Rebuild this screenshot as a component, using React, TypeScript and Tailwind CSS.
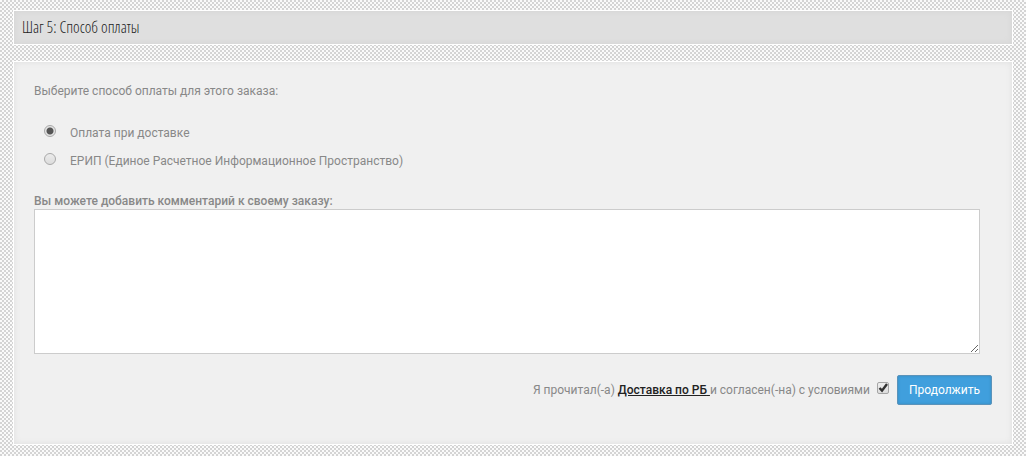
import { useState } from "react";

const radioClass =
  "size-3 shrink-0 appearance-none rounded-full border border-[#a9a9a9] bg-linear-to-b from-[#ececec] to-[#dcdcdc] checked:bg-[radial-gradient(circle,#555_3px,#e4e4e4_4px)]";

const methods = [
  { id: "cod", label: "Оплата при доставке" },
  { id: "erip", label: "ЕРИП (Единое Расчетное Информационное Пространство)" },
];

export default function App() {
  const [method, setMethod] = useState("cod");
  const [agreed, setAgreed] = useState(true);

  return (
    <main className="min-h-screen bg-[#fafafa] bg-[conic-gradient(#d4d4d4_25%,transparent_0_50%,#d4d4d4_0_75%,transparent_0)] bg-size-[4px_4px] px-[13px] py-[10px] font-['Roboto',sans-serif] text-[12px] leading-4 text-[#888]">
      <h2 className="border border-white bg-[#dfdfdf] px-2 py-[7px] font-['Open_Sans_Condensed_Light','Open_Sans_Condensed','Liberation_Sans_Narrow',sans-serif] text-[16px] leading-[19px] font-light text-[#222] shadow-[inset_0_0_6px_#d3d3d3]">
        Шаг 5: Способ оплаты
      </h2>

      <form
        className="mt-4 border border-white bg-[#f0f0f0] pt-[21px] pr-5 pb-[39px] pl-5 shadow-[inset_0_0_6px_#dedede]"
        onSubmit={(e) => e.preventDefault()}
      >
        <fieldset>
          <legend>Выберите способ оплаты для этого заказа:</legend>
          <div className="mt-[26px] flex flex-col gap-3 pl-[10px]">
            {methods.map((m) => (
              <label key={m.id} className="flex gap-[14px]">
                <input
                  type="radio"
                  name="payment"
                  value={m.id}
                  checked={method === m.id}
                  onChange={() => setMethod(m.id)}
                  className={radioClass}
                />
                {m.label}
              </label>
            ))}
          </div>
        </fieldset>

        <label htmlFor="comment" className="mt-6 block font-medium">
          Вы можете добавить комментарий к своему заказу:
        </label>
        <textarea
          id="comment"
          className="block h-[145px] w-[calc(100%-12px)] border border-[#ccc] bg-white"
        />

        <div className="mt-[21px] flex items-center justify-end">
          <label htmlFor="agree">
            Я прочитал(-а){" "}
            <a href="#delivery" className="font-medium text-[#222] underline">
              Доставка по РБ{" "}
            </a>
            и согласен(-на) с условиями
          </label>
          <span className="relative mr-2 mb-1 ml-[7px] flex">
            <input
              id="agree"
              type="checkbox"
              checked={agreed}
              onChange={(e) => setAgreed(e.target.checked)}
              className="size-3 appearance-none rounded-xs border border-[#a5a5a5] bg-linear-to-b from-[#eee] to-[#ddd]"
            />
            {agreed && (
              <svg viewBox="0 0 12 12" className="pointer-events-none absolute inset-0 size-3" fill="none" stroke="#333" strokeWidth="2.4">
                <path d="M2.5 6 L5 8.6 L10 2" />
              </svg>
            )}
          </span>
          <button
            type="submit"
            className="h-[30px] rounded-xs border border-[#5b93ba] bg-[#409fdd] px-[11px] text-white shadow-[inset_0_0_3px_#378abf]"
          >
            Продолжить
          </button>
        </div>
      </form>
    </main>
  );
}
